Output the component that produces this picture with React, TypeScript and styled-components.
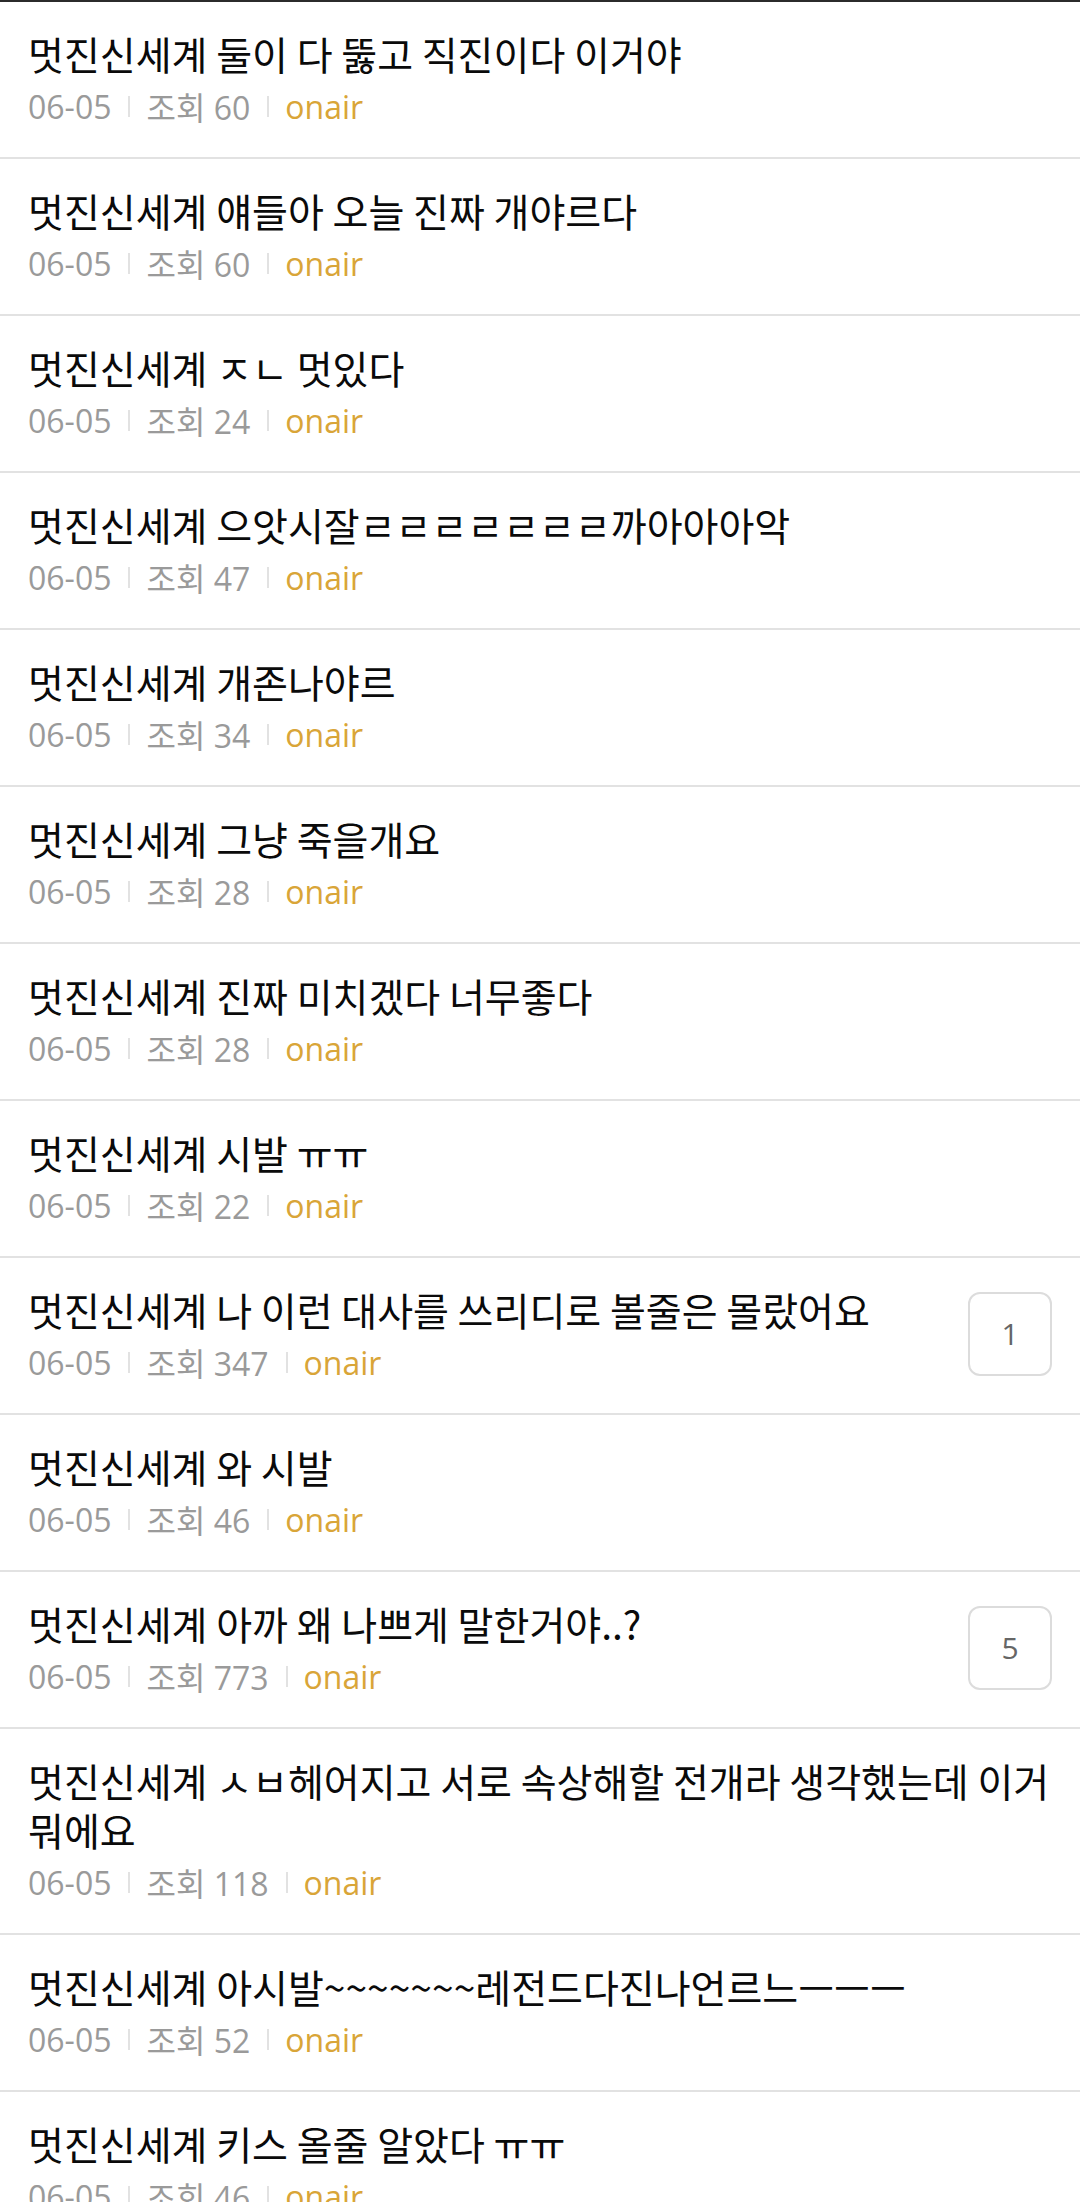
import React from 'react';
import styled, { createGlobalStyle } from 'styled-components';

interface Post {
  title: string;
  date: string;
  views: number;
  author: string;
  comments?: number;
}

const posts: Post[] = [
  { title: '멋진신세계 둘이 다 뚫고 직진이다 이거야', date: '06-05', views: 60, author: 'onair' },
  { title: '멋진신세계 얘들아 오늘 진짜 개야르다', date: '06-05', views: 60, author: 'onair' },
  { title: '멋진신세계 ㅈㄴ 멋있다', date: '06-05', views: 24, author: 'onair' },
  { title: '멋진신세계 으앗시잘ㄹㄹㄹㄹㄹㄹㄹ까아아아악', date: '06-05', views: 47, author: 'onair' },
  { title: '멋진신세계 개존나야르', date: '06-05', views: 34, author: 'onair' },
  { title: '멋진신세계 그냥 죽을개요', date: '06-05', views: 28, author: 'onair' },
  { title: '멋진신세계 진짜 미치겠다 너무좋다', date: '06-05', views: 28, author: 'onair' },
  { title: '멋진신세계 시발 ㅠㅠ', date: '06-05', views: 22, author: 'onair' },
  { title: '멋진신세계 나 이런 대사를 쓰리디로 볼줄은 몰랐어요', date: '06-05', views: 347, author: 'onair', comments: 1 },
  { title: '멋진신세계 와 시발', date: '06-05', views: 46, author: 'onair' },
  { title: '멋진신세계 아까 왜 나쁘게 말한거야..?', date: '06-05', views: 773, author: 'onair', comments: 5 },
  { title: '멋진신세계 ㅅㅂ헤어지고 서로 속상해할 전개라 생각했는데 이거 뭐에요', date: '06-05', views: 118, author: 'onair' },
  { title: '멋진신세계 아시발~~~~~~~레전드다진나언르느ㅡㅡㅡ', date: '06-05', views: 52, author: 'onair' },
  { title: '멋진신세계 키스 올줄 알았다 ㅠㅠ', date: '06-05', views: 46, author: 'onair' },
];

const App: React.FC = () => {
  return (
    <>
      <GlobalStyle />
      <List>
        {posts.map((post, index) => (
          <Row key={index}>
            <Body>
              <Title>{post.title}</Title>
              <Meta>
                <span>{post.date}</span>
                <Sep />
                <span>조회 {post.views}</span>
                <Sep />
                <Author>{post.author}</Author>
              </Meta>
            </Body>
            {post.comments !== undefined && <CommentBadge>{post.comments}</CommentBadge>}
          </Row>
        ))}
      </List>
    </>
  );
};

export default App;

const GlobalStyle = createGlobalStyle`
  html, body {
    margin: 0;
    padding: 0;
    background: #fff;
  }
  body {
    font-family: "Noto Sans CJK KR", "Noto Sans", sans-serif;
    -webkit-font-smoothing: antialiased;
  }
`;

const List = styled.div`
  border-top: 2px solid #2b2b2b;
`;

const Row = styled.div`
  display: flex;
  align-items: center;
  padding: 27px 28px 31px 28px;
  border-bottom: 2px solid #e2e2e2;
`;

const Body = styled.div`
  flex: 1;
  min-width: 0;
`;

const Title = styled.div`
  font-family: "Noto Sans CJK KR", sans-serif;
  font-size: 39px;
  line-height: 49px;
  color: #0a0a0a;
  word-break: keep-all;
`;

const Meta = styled.div`
  display: flex;
  align-items: center;
  margin-top: 8px;
  height: 40px;
  font-family: "Open Sans", "Noto Sans CJK KR", sans-serif;
  font-size: 32px;
  color: #9a9a9a;
`;

const Sep = styled.i`
  display: inline-block;
  width: 2px;
  height: 21px;
  margin: 0 16px 0 17px;
  background: #e2e2e2;
`;

const Author = styled.span`
  color: #d9a538;
`;

const CommentBadge = styled.div`
  flex: none;
  display: flex;
  align-items: center;
  justify-content: center;
  width: 80px;
  height: 80px;
  margin-left: 20px;
  border: 2px solid #dcdcdc;
  border-radius: 12px;
  font-family: "Open Sans", sans-serif;
  font-size: 30px;
  color: #666;
`;
